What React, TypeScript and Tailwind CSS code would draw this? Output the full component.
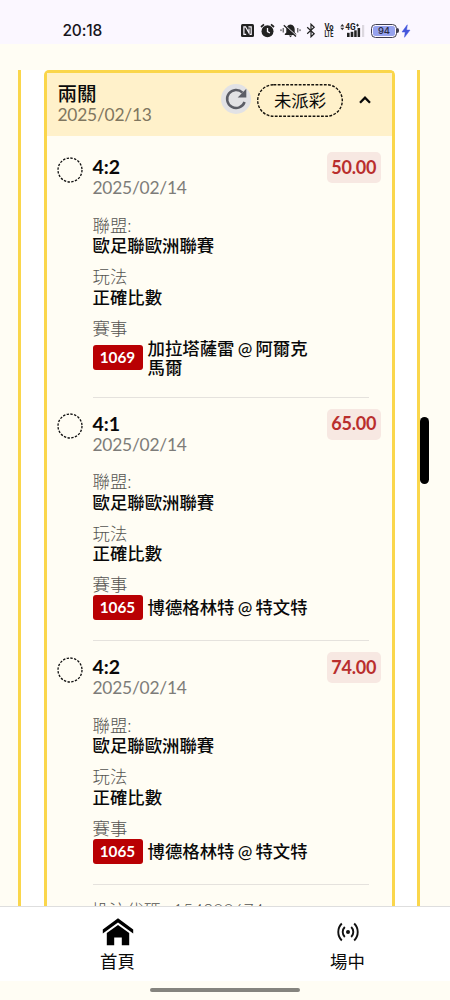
import type { ReactNode } from "react";

type Bet = {
  score: string;
  odds: string;
  matchNo: string;
  teams: ReactNode;
};

const bets: Bet[] = [
  { score: "4:2", odds: "50.00", matchNo: "1069", teams: <>加拉塔薩雷 @ 阿爾克<br />馬爾</> },
  { score: "4:1", odds: "65.00", matchNo: "1065", teams: "博德格林特 @ 特文特" },
  { score: "4:2", odds: "74.00", matchNo: "1065", teams: "博德格林特 @ 特文特" },
];

function StatusBar() {
  return (
    <header className="flex h-[44px] shrink-0 items-start bg-[#fbf7ff] pl-[62.5px] pt-[20px] text-[#17151b]">
      <span className="w-[178.5px] font-['Inter','Roboto',sans-serif] text-[15.5px] font-medium leading-[21px] tracking-[-0.2px]">20:18</span>
      <div className="flex h-[21px] items-center">
        <svg className="h-[13px] w-[13px]" viewBox="0 0 13 13">
          <rect width="13" height="13" rx="1.5" fill="#222" />
          <path d="M5.2 10.3H2.9V2.8h1.6L8 9V4.4M7.4 2.8h2.8v7.5H9" fill="none" stroke="#fbf7ff" strokeWidth="1.2" />
        </svg>
        <svg className="ml-[6px] h-[15px] w-[15px]" viewBox="0 0 15 15">
          <circle cx="7.5" cy="8.2" r="6" fill="#222" />
          <path d="M1 4L4 1.3M14 4L11 1.3" stroke="#222" strokeWidth="1.7" />
          <path d="M7.5 5v3.6l2.4 1.4" fill="none" stroke="#fbf7ff" strokeWidth="1.3" />
        </svg>
        <svg className="ml-[5px] h-[15px] w-[21px]" viewBox="0 0 21 15">
          <path d="M10.5 1.5c-3 .4-4.2 2.4-4.2 5v3L4.8 11v1h11.4v-1l-1.5-1.5v-3c0-2.6-1.2-4.6-4.2-5z" fill="#222" />
          <path d="M8.8 12.5h3.4l-1.7 1.7z" fill="#222" />
          <path d="M5 2.5L16.5 13" stroke="#fbf7ff" strokeWidth="1.2" />
          <path d="M3.8 2.3L16 13.6" stroke="#222" strokeWidth="1.3" />
          <path d="M3.2 5v4.5M1 6.3v1.8M17.8 5v4.5M20 6.3v1.8" stroke="#333" strokeWidth="1" />
        </svg>
        <svg className="ml-[5px] h-[15px] w-[10px]" viewBox="0 0 10 15">
          <path d="M1.2 4.3l7 6.4L5 13.8V1.2l3.2 3.1-7 6.4" fill="none" stroke="#222" strokeWidth="1.2" />
        </svg>
        <svg className="ml-[8px] h-[16px] w-[10px] overflow-visible" viewBox="0 0 10 16" fill="#222" fontFamily="Roboto, sans-serif" fontSize="8.4" fontWeight="700">
          <text x="0.4" y="7.4" textLength="9" lengthAdjust="spacingAndGlyphs">Vo</text>
          <text x="0.4" y="14.4" textLength="9" lengthAdjust="spacingAndGlyphs">LTE</text>
        </svg>
        <svg className="ml-[6px] h-[15px] w-[25px]" viewBox="0 0 25 15">
          <path d="M.3 3.4L2.3 1l2 2.4zM.3 4.8L2.3 7.2l2-2.4z" fill="#333" />
          <text x="5.2" y="7.4" fontFamily="Roboto, sans-serif" fontSize="9" fontWeight="700" fill="#222" textLength="10.4" lengthAdjust="spacingAndGlyphs">4G</text>
          <path d="M16 2.2h3M17.5 .8v2.8" stroke="#222" strokeWidth=".9" />
          <rect x="7" y="9.8" width="2.6" height="4.2" fill="#222" />
          <rect x="10.7" y="8.8" width="2.6" height="5.2" fill="#222" />
          <rect x="14.2" y="7.3" width="2.5" height="6.7" fill="#222" />
          <rect x="17.6" y="5" width="2.5" height="9" fill="#222" />
          <rect x="22" y="2" width="2.2" height="12" fill="#dcd8df" />
        </svg>
        <div className="ml-[6px] flex h-[14px] w-[26px] items-center rounded-[4.5px] border border-[#3e3d4e] p-[1px]">
          <div className="flex h-full w-full items-center justify-center rounded-[2.5px] bg-[#96a2ee] font-['Inter',sans-serif] text-[9.5px] font-medium leading-none text-[#292b42]">94</div>
        </div>
        <div className="h-[5px] w-[2px] rounded-r-sm bg-[#3e3d4e]" />
        <svg className="ml-[2px] h-[14px] w-[10px]" viewBox="0 0 10 14">
          <path d="M6.3 .8L1 8h3.2l-.7 5.3L9 6.1H5.6z" fill="#4355dc" stroke="#4355dc" strokeWidth=".5" />
        </svg>
      </div>
    </header>
  );
}

function Field({ label, value }: { label: string; value: string }) {
  return (
    <div className="mb-[10.5px]">
      <div className="h-[20.5px] text-[17.4px] font-light leading-[20.5px] text-[#555451]">{label}</div>
      <div className="h-[20.5px] text-[17.4px] font-medium leading-[20.5px]">{value}</div>
    </div>
  );
}

function BetItem({ bet }: { bet: Bet }) {
  return (
    <section className="flex pl-[10px] pr-[11px]">
      <div className="w-[35.5px] shrink-0 pt-[15.5px]">
        <svg className="h-[26px] w-[26px]" viewBox="0 0 26 26">
          <circle cx="13" cy="13" r="12" fill="none" stroke="#111" strokeWidth="1.3" strokeDasharray="2.4 1.37" />
        </svg>
      </div>
      <div className="min-w-0 flex-1">
        <div className="flex items-start justify-between pt-[11px]">
          <div className="pt-[4px]">
            <div className="h-[22px] text-[19.5px] font-bold leading-[22px]">{bet.score}</div>
            <div className="h-[20px] text-[17.4px] leading-[20px] tracking-[-0.22px] text-[#7d7c79]">2025/02/14</div>
          </div>
          <div className="flex h-[31px] w-[54.5px] items-center justify-center rounded-[5px] bg-[#f7e8e2] pb-px text-[18px] font-bold tracking-[-0.2px] text-[#b92e2d]">{bet.odds}</div>
        </div>
        <div className="pt-[17.5px]">
          <Field label="聯盟:" value="歐足聯歐洲聯賽" />
          <Field label="玩法" value="正確比數" />
          <div className="h-[20px] text-[17.4px] font-light leading-[20px] text-[#555451]">賽事</div>
        </div>
        <div className="mr-[12px] flex items-center border-b border-[#e5e2dd] pb-[20px]">
          <span className="flex h-[25px] w-[50px] shrink-0 items-center justify-center rounded-[3px] bg-[#b90003] text-[15.3px] font-bold text-white">{bet.matchNo}</span>
          <span className="ml-[5px] whitespace-nowrap text-[17.4px] font-medium leading-[19px] [word-spacing:-1.2px]">{bet.teams}</span>
        </div>
      </div>
    </section>
  );
}

function Ticket() {
  return (
    <article className="w-[351px] rounded-t-[5px] border-x-[3px] border-t-[3px] border-[#fad64b] bg-[#fffdf4]">
      <div className="flex h-[63px] bg-[#fff1ca] pl-[10.5px]">
        <div className="w-[163.5px] pt-[10px]">
          <h1 className="h-[21px] text-[19.5px] font-medium leading-[21px]">兩關</h1>
          <div className="h-[20px] pt-[0.5px] text-[17.4px] leading-[20px] tracking-[-0.22px] text-[#7f765f]">2025/02/13</div>
        </div>
        <button className="mt-[11px] flex h-[30px] w-[30px] items-center justify-center rounded-full bg-[#e2e2e5]">
          <svg className="h-[24px] w-[24px]" viewBox="0 0 24 24">
            <path d="M20.6 15a9 9 0 1 1-2.1-9.4" fill="none" stroke="#5b5d66" strokeWidth="2.5" />
            <path d="M22.3 1.8v8.6h-8.6z" fill="#5b5d66" />
          </svg>
        </button>
        <div className="ml-[6px] mt-[11px] h-[33px] w-[86px]">
          <svg className="absolute h-[33px] w-[86px]" viewBox="0 0 86 33">
            <rect x=".7" y=".7" width="84.6" height="31.6" rx="15.8" fill="none" stroke="#17140d" strokeWidth="1.4" strokeDasharray="2.8 1.4" />
          </svg>
          <span className="flex h-full items-center justify-center pt-px text-[17.4px]">未派彩</span>
        </div>
        <svg className="ml-[15px] mt-[19.5px] h-[14px] w-[14px]" viewBox="0 0 14 14">
          <path d="M2 9.7L7 4.6l5 5.1" fill="none" stroke="#080808" strokeWidth="2.3" />
        </svg>
      </div>
      <div className="pt-[5px]">
        {bets.map((bet, i) => <BetItem key={i} bet={bet} />)}
      </div>
      <div className="ml-[44.5px] pt-[16px] text-[17.4px] font-light leading-[20px] text-[#555451] [word-spacing:3px]">投注代碼: 154800674</div>
    </article>
  );
}

export default function App() {
  return (
    <div className="relative flex h-[1000px] w-[450px] flex-col overflow-hidden bg-[#fffdf4] font-['Lato','Noto_Sans_CJK_TC',sans-serif] text-[#090909]">
      <StatusBar />
      <main className="ml-[18px] mt-[26px] h-[836px] w-[402px] shrink-0 overflow-hidden border-x-[3px] border-[#fad64b] bg-white pl-[23px]">
        <Ticket />
      </main>
      <div className="absolute left-[420px] top-[416.5px] h-[67px] w-[9px] rounded-full bg-black" />
      <nav className="grid h-[75px] shrink-0 grid-cols-[235px_1fr] border-t border-[#dedede] bg-white text-[17.4px]">
        <a className="flex flex-col items-center pt-[10px]">
          <svg className="h-[30px] w-[32px]" viewBox="0 0 32 30">
            <path d="M16 1.2L.8 12.6v4L16 5.6l15.2 11v-4z" />
            <path d="M4.8 16L16 8l11.2 8v12.2h-7.4v-7.6h-7.6v7.6H4.8z" />
          </svg>
          <span className="mt-[3px] leading-[24px]">首頁</span>
        </a>
        <a className="flex flex-col items-center pl-[10px] pt-[14px]">
          <svg className="h-[22px] w-[26px]" viewBox="0 0 26 22" fill="none" stroke="#111" strokeWidth="1.9">
            <path d="M6.8 2.5a12 12 0 0 0 0 17M9.8 6a7 7 0 0 0 0 10M16.2 6a7 7 0 0 1 0 10M19.2 2.5a12 12 0 0 1 0 17" />
            <circle cx="13" cy="11" r="2" fill="#111" stroke="none" />
          </svg>
          <span className="mt-[7px] leading-[24px]">場中</span>
        </a>
      </nav>
      <div className="flex justify-center pt-[6.5px]">
        <div className="h-[4px] w-[150px] rounded-full bg-[#85847e]" />
      </div>
    </div>
  );
}
